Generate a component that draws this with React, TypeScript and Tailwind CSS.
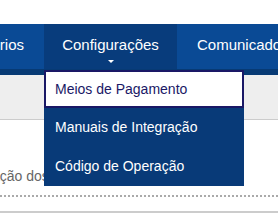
import React from 'react';

const font = { fontFamily: '"Liberation Sans", Arial, sans-serif' };

export default function App() {
    return (
        <div className="w-[278px] h-[217px] overflow-hidden bg-white relative" style={font}>
            {/* top blank */}
            <div className="h-[24px] bg-white" />

            {/* nav bar */}
            <div className="h-[51px] bg-[#0a4a95] border-b-[6px] border-[#073a74] flex text-white text-[15px]">
                <div className="w-[44px] shrink-0 overflow-hidden flex justify-end items-center pr-[20px] whitespace-nowrap">
                    <span className="-mt-[2px]">Relatórios</span>
                </div>
                <div className="w-[133px] shrink-0 bg-[#083c7c] relative flex items-center justify-center whitespace-nowrap">
                    <span className="-mt-[2px]">Configurações</span>
                    <span className="absolute left-[64px] top-[36px] w-0 h-0 border-l-[3px] border-r-[3px] border-t-[3px] border-l-transparent border-r-transparent border-t-white" />
                </div>
                <div className="shrink-0 flex items-center pl-[20px] whitespace-nowrap">
                    <span className="-mt-[2px]">Comunicados</span>
                </div>
            </div>

            {/* gray band */}
            <div className="h-[45px] bg-[#eeeeee] border-b border-[#cccccc]" />

            {/* content */}
            <div className="pt-[45px]">
                <div className="text-[14px] text-[#666666] whitespace-nowrap -ml-[8px] leading-[22px]">ação dos cadastros</div>
            </div>
            <div className="mt-[8px] border-b-2 border-dotted border-[#aaaaaa]" />
            <div className="mt-[14px] border-b-2 border-[#cccccc]" />

            {/* dropdown */}
            <div className="absolute left-[44px] top-[70px] w-[200px] bg-[#083a78] text-[14px]">
                <div className="h-[38px] bg-white border-2 border-[#1a1866] text-[#1a1866] flex items-center pl-[9px]">Meios de Pagamento</div>
                <div className="h-[39px] text-white flex items-center pl-[11px]">Manuais de Integração</div>
                <div className="h-[39px] text-white flex items-center pl-[11px]">Código de Operação</div>
            </div>
        </div>
    );
}
